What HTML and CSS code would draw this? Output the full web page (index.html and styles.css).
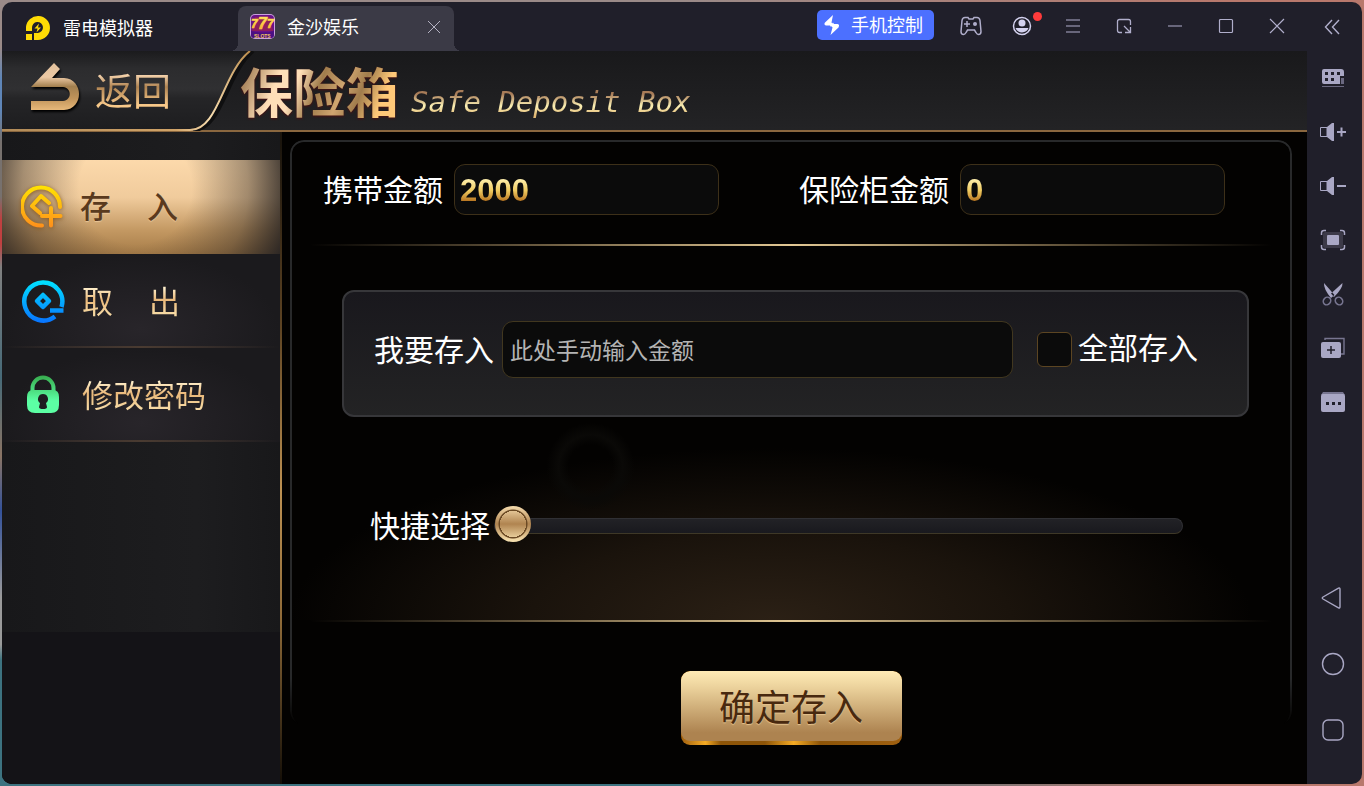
FILE: index.html
```html
<!DOCTYPE html>
<html lang="zh-CN">
<head>
<meta charset="utf-8">
<title>保险箱</title>
<link rel="stylesheet" href="styles.css">
</head>
<body>
<div class="window">
  <header class="topbar">
    <div class="brand">
      <svg width="26" height="26" viewBox="0 0 26 26" aria-hidden="true">
        <path fill="#ffdc05" fill-rule="evenodd" d="M1 16V12A12 12 0 1 1 13 25H9V18H13A5.500 5.500 0 1 0 7 13V16Z"/>
        <path fill="#ffdc05" d="M1 19h6v6H1z"/>
        <path fill="#ffdc05" d="M14 8.500 9.500 13.500h3L11.500 17.500 16 12.500h-3z"/>
      </svg>
      <span>雷电模拟器</span>
    </div>
    <div class="tab">
      <svg width="25" height="25" viewBox="0 0 25 25" aria-hidden="true">
        <defs>
          <linearGradient id="sevens" x1="0" y1="0" x2="0" y2="1"><stop offset="0" stop-color="#fff27a"/><stop offset="1" stop-color="#f5a01c"/></linearGradient>
        </defs>
        <rect width="25" height="25" rx="5" fill="#c9a0dc"/>
        <rect x="1" y="1" width="23" height="23" rx="4" fill="#6a1288"/>
        <path d="M2 17 5 3h15l3 14z" fill="#8d1f5c"/>
        <g fill="url(#sevens)" stroke="#ffd23c" stroke-width=".6" class="slot-digits">
          <text x="1" y="14" font-size="12">7</text>
          <text x="17" y="14" font-size="12">7</text>
          <text x="8" y="15" font-size="16">7</text>
        </g>
        <path d="M1 17q11.500 3 23 0v4a3 3 0 0 1-3 3H4a3 3 0 0 1-3-3z" fill="#4b1183"/>
        <text x="4" y="24" font-size="5" fill="#f3c560" class="slot-word">SLOTS</text>
      </svg>
      <span class="tab-name">金沙娱乐</span>
      <button class="tab-close" aria-label="关闭标签"><svg width="14" height="14" viewBox="0 0 14 14"><path d="M1 1 13 13M13 1 1 13" stroke="#b4b2c2"/></svg></button>
    </div>
    <button class="phone">
      <svg width="16" height="22" viewBox="0 0 16 22" aria-hidden="true"><path fill="#fff" d="M9 1 1 8.500q-1.500 2.500 1 3h4l1 1.500L9 10.500 7.500 8.500zM6.500 21l8-7.500q1.500-3-1-3.500H10L9 8.500 7 11l1.500 2.500z"/></svg>
      <span>手机控制</span>
    </button>
    <nav class="tools">
      <button class="tool" aria-label="手柄"><svg width="22" height="20" viewBox="0 0 22 20" fill="none" stroke="#b0aecb" stroke-width="1.500"><path d="M5 1.500H8L9 3h4l1-1.500h3q2.500 0 3 3l1 11q0 3-2.500 3-1.500 0-2.500-2l-1.500-2.500h-7L6 16.500q-1 2-2.500 2-2.500 0-2.500-3l1-11q.5-3 3-3zM7 5v6M4 8h6"/><circle cx="15" cy="8" r="2" fill="#b0aecb" stroke="none"/></svg></button>
      <button class="tool account" aria-label="账号"><svg width="20" height="20" viewBox="0 0 20 20"><circle cx="10" cy="10" r="8.500" fill="#201f2a" stroke="#d3d1ee" stroke-width="1.500"/><circle cx="10" cy="7" r="3.500" fill="#d3d1ee"/><path d="M3.500 12h13a7 7 0 0 1-13 0z" fill="#d3d1ee"/></svg><i class="dot"></i></button>
      <button class="tool" aria-label="菜单"><svg width="16" height="16" viewBox="0 0 16 16" stroke="#b0aecb" stroke-width="1.200"><path d="M1 2h14M1 8h14M1 14h14"/></svg></button>
      <button class="tool" aria-label="小窗"><svg width="18" height="18" viewBox="0 0 18 18" fill="none" stroke="#b0aecb" stroke-width="1.300"><path d="M7 15.500H4.500q-2 0-2-2v-9q0-2 2-2h9q2 0 2 2V8M9 9l6 6M10 15.500h5.500V10"/></svg></button>
      <button class="tool" aria-label="最小化"><svg width="16" height="16" viewBox="0 0 16 16" stroke="#b0aecb" stroke-width="1.200"><path d="M1 8h14"/></svg></button>
      <button class="tool" aria-label="最大化"><svg width="16" height="16" viewBox="0 0 16 16" fill="none" stroke="#b0aecb" stroke-width="1.200"><rect x="1.500" y="1.500" width="13" height="13" rx="1"/></svg></button>
      <button class="tool" aria-label="关闭"><svg width="16" height="16" viewBox="0 0 16 16" stroke="#b0aecb" stroke-width="1.200"><path d="m1 1 14 14M15 1 1 15"/></svg></button>
      <button class="tool collapse" aria-label="收起"><svg width="16" height="16" viewBox="0 0 16 16" fill="none" stroke="#b0aecb" stroke-width="1.400"><path d="M8 1 1.500 8 8 15M15 1 8.500 8 15 15"/></svg></button>
    </nav>
  </header>

  <div class="workspace">
    <div class="game">
      <header class="game-head">
        <svg class="head-shape" width="262" height="80" viewBox="0 0 262 80" aria-hidden="true">
          <defs>
            <linearGradient id="plate" x1="0" y1="0" x2="0" y2="1"><stop offset="0" stop-color="#1b1b1d"/><stop offset=".22" stop-color="#2c2c2e"/><stop offset=".48" stop-color="#303032"/><stop offset=".6" stop-color="#252527"/><stop offset="1" stop-color="#1d1d1f"/></linearGradient>
            <linearGradient id="rim" x1="0" y1="0" x2="1" y2="0"><stop offset="0" stop-color="#b08a58"/><stop offset=".7" stop-color="#d0a368"/><stop offset=".84" stop-color="#f7dcae"/><stop offset="1" stop-color="#b98a4a"/></linearGradient>
          </defs>
          <path d="M0 0H248C220 22 217 79 188 79H0z" fill="url(#plate)"/>
          <path d="M251 0C224 22 220 79 191 79" fill="none" stroke="#0f0f10" stroke-width="4"/>
          <path d="M248 0C220 22 217 79 188 79H0" fill="none" stroke="url(#rim)" stroke-width="2"/>
        </svg>
        <button class="back">
          <svg width="52" height="52" viewBox="0 0 52 52" aria-hidden="true">
            <defs><linearGradient id="arrow" x1="0" y1="0" x2="0" y2="1"><stop offset="0" stop-color="#e2c19c"/><stop offset=".3" stop-color="#ecc9a4"/><stop offset=".5" stop-color="#a3804f"/><stop offset=".75" stop-color="#c0935a"/><stop offset="1" stop-color="#e7b87a"/></linearGradient></defs>
            <path d="M26 2 32 8 24 17H36C56 18 56 48 36 49H3V40H35C44 39 44 27 35 26H3z" fill="url(#arrow)"/>
          </svg>
          <span>返回</span>
        </button>
        <h1 class="title">保险箱</h1>
        <p class="subtitle">Safe Deposit Box</p>
      </header>

      <div class="game-body">
        <nav class="menu">
          <button class="menu-item active">
            <svg width="44" height="46" viewBox="0 0 44 46" fill="none" aria-hidden="true">
              <defs><linearGradient id="gold" gradientUnits="userSpaceOnUse" x1="0" y1="0" x2="0" y2="46"><stop offset="0" stop-color="#ffe900"/><stop offset="1" stop-color="#ff8c1c"/></linearGradient></defs>
              <g stroke="url(#gold)" stroke-width="4" stroke-linecap="round" stroke-linejoin="round"><path d="M39 24A19 19 0 1 0 21 42.500M28 20l-8-7L11 23l8 7M30 25V42.500M21 33H39.500" /></g>
            </svg>
            <span class="pair"><span>存</span><span>入</span></span>
          </button>
          <button class="menu-item">
            <svg width="44" height="46" viewBox="0 0 44 46" fill="none" aria-hidden="true">
              <defs><linearGradient id="blue" gradientUnits="userSpaceOnUse" x1="0" y1="0" x2="0" y2="46"><stop offset="0" stop-color="#00ecff"/><stop offset="1" stop-color="#0873ff"/></linearGradient></defs>
              <g stroke="url(#blue)" stroke-width="4.500"><path d="M40.500 30A19 19 0 1 0 34 39.500"/><path stroke-linejoin="round" d="m22 18 6 6-6 6-6-6z"/><path d="M29 33.500H42.500" /></g>
            </svg>
            <span class="pair"><span>取</span><span>出</span></span>
          </button>
          <button class="menu-item">
            <svg width="44" height="46" viewBox="0 0 44 46" fill="none" aria-hidden="true">
              <defs><linearGradient id="green" gradientUnits="userSpaceOnUse" x1="0" y1="4" x2="0" y2="30"><stop offset="0" stop-color="#36a94b"/><stop offset="1" stop-color="#5cffa4"/></linearGradient></defs>
              <path d="M11.500 21V17a10.500 10.500 0 0 1 21 0v4" stroke="url(#green)" stroke-width="4"/>
              <path fill="url(#green)" fill-rule="evenodd" d="M12 19H32q6 0 6 7v8q0 8-8 8H14q-8 0-8-8V26q0-7 6-7zM22 23a5 5 0 0 0-3 9l-1 4q0 2 4 2t4-2l-1-4a5 5 0 0 0-3-9z"/>
            </svg>
            <span class="menu-text">修改密码</span>
          </button>
        </nav>

        <main class="main">
          <form class="panel">
            <div class="balances">
              <div class="field"><label for="carry">携带金额</label><output class="amount" id="carry"><span>2000</span></output></div>
              <div class="field"><label for="safe">保险柜金额</label><output class="amount" id="safe"><span>0</span></output></div>
            </div>
            <div class="rule"></div>
            <div class="stage">
              <div class="deposit">
                <label for="sum">我要存入</label>
                <input class="sum" id="sum" type="text" placeholder="此处手动输入金额">
                <div class="all"><input id="all" type="checkbox"><label for="all">全部存入</label></div>
              </div>
              <div class="quick">
                <label for="range">快捷选择</label>
                <input class="range" id="range" type="range" min="0" max="100" value="0">
              </div>
            </div>
            <div class="rule"></div>
            <div class="actions"><button class="submit" type="button"><span>确定存入</span></button></div>
          </form>
        </main>
      </div>
    </div>

    <aside class="rail">
      <button class="rail-item" aria-label="键盘"><svg width="24" height="20" viewBox="0 0 24 20"><path fill="#a9a7c4" d="M3 1h17q3 0 3 3v4h-4v8H3q-2 0-2-2V3q0-2 2-2z"/><path fill="#201f2a" d="M4 4h3v3H4zM10 4h3v3h-3zM16 4h3v3h-3zM4 10h3v3H4zM10 10h3v3h-3z"/><path fill="#6a6880" d="M20 10h3v6h-3zM1 18h22v1H1z"/></svg></button>
      <button class="rail-item" aria-label="音量加"><svg width="28" height="20" viewBox="0 0 28 20"><path d="M1.500 5.500H8v9H1.500z" fill="none" stroke="#a9a7c4"/><path fill="#a9a7c4" d="M8 5 13 1h2v18h-2l-5-4zM18 9h3.500V5.500h2V9H27v2h-3.500v3.500h-2V11H18z"/></svg></button>
      <button class="rail-item" aria-label="音量减"><svg width="28" height="20" viewBox="0 0 28 20"><path d="M1.500 5.500H8v9H1.500z" fill="none" stroke="#a9a7c4"/><path fill="#a9a7c4" d="M8 5 13 1h2v18h-2l-5-4zM18 9h9v2h-9z"/></svg></button>
      <button class="rail-item" aria-label="全屏"><svg width="26" height="22" viewBox="0 0 26 22"><rect x="3" y="3" width="20" height="16" rx="2" fill="#3c3a48"/><rect x="7" y="6" width="12" height="10" rx="1" fill="#a9a7c4"/><path d="M1.500 6V4q0-2.500 2.500-2.500h2M20 1.500h2q2.500 0 2.500 2.500v2M24.500 16v2q0 2.500-2.500 2.500h-2M6 20.500H4Q1.500 20.500 1.500 18v-2" fill="none" stroke="#a9a7c4" stroke-width="1.500"/></svg></button>
      <button class="rail-item" aria-label="截图"><svg width="22" height="24" viewBox="0 0 22 24"><path fill="#a9a7c4" d="M2 1q-.5 6 7 15l3.500-3zM20.500 1q.5 5-8.500 14L9 11.500z"/><g fill="none" stroke="#777590" stroke-width="1.600"><ellipse cx="5" cy="19" rx="3.500" ry="4" transform="rotate(40 5 19)"/><ellipse cx="17" cy="19" rx="3.500" ry="4" transform="rotate(-40 17 19)"/></g></svg></button>
      <button class="rail-item" aria-label="多开"><svg width="24" height="22" viewBox="0 0 24 22"><path d="M4 3V1.500h19V17h-3" fill="none" stroke="#777590" stroke-width="1.400"/><rect y="5" width="20" height="16" rx="2" fill="#a9a7c4"/><path d="M10 9v8M6 13h8" stroke="#201f2a" stroke-width="1.500"/></svg></button>
      <button class="rail-item" aria-label="更多"><svg width="24" height="22" viewBox="0 0 24 22"><path d="M2 1h20l2 3H0z" fill="#777590"/><rect y="3" width="24" height="18" rx="2" fill="#a9a7c4"/><path fill="#201f2a" d="M5 11h3v3H5zM11 11h3v3h-3zM17 11h3v3h-3z"/></svg></button>
      <div class="rail-nav">
        <button class="nav-item" aria-label="返回键"><svg width="24" height="24" viewBox="0 0 24 24" fill="none" stroke="#a9a7c4" stroke-width="1.400"><path stroke-linejoin="round" d="M17.500 2.200q1.500-.8 1.500 1v17.600q0 1.800-1.500 1L2 13q-1.500-1 0-2z"/></svg></button>
        <button class="nav-item" aria-label="主页键"><svg width="24" height="24" viewBox="0 0 24 24" fill="none" stroke="#a9a7c4" stroke-width="1.400"><circle cx="12" cy="12" r="10.500"/></svg></button>
        <button class="nav-item" aria-label="任务键"><svg width="24" height="24" viewBox="0 0 24 24" fill="none" stroke="#a9a7c4" stroke-width="1.400"><rect x="2" y="2" width="20" height="20" rx="5"/></svg></button>
      </div>
    </aside>
  </div>
</div>
</body>
</html>
```

FILE: styles.css
```css
* { box-sizing: border-box; }

body {
  margin: 0;
  padding: 2px;
  height: 100vh;
  display: flex;
  background:
    linear-gradient(90deg, transparent 50%, #b8786c 90%),
    linear-gradient(#9a8a88 0 6%, #5f86b8 10% 14%, #77716e 18% 25%, #c04040 28% 31%, #808080 34%, #476a78 48%, #8a7464 58%, #34529a 65%, #9a9a9a 76% 82%, #3d7380 84%);
  font-family: "Noto Sans CJK SC", "Noto Sans", sans-serif;
  color: #fff;
}

button {
  border: 0;
  padding: 0;
  background: none;
  color: inherit;
  font: inherit;
}

svg { display: block; flex: none; }

.window {
  flex: 1;
  min-width: 0;
  display: flex;
  flex-direction: column;
  border-radius: 10px;
  overflow: hidden;
  background: #201f2a;
}

/* emulator title bar */
.topbar {
  height: 49px;
  flex: none;
  display: flex;
  font-size: 18px;
  line-height: 24px;
}

.topbar span { padding-bottom: 2px; }

.brand {
  width: 236px;
  display: flex;
  align-items: center;
  gap: 12px;
  padding: 2px 0 0 23px;
}

.tab {
  position: relative;
  width: 216px;
  margin-top: 4px;
  padding: 0 13px 4px 12px;
  display: flex;
  align-items: center;
  gap: 12px;
  background: #3b3a46;
  border-radius: 8px 8px 0 0;
}

.tab::before,
.tab::after {
  content: "";
  position: absolute;
  bottom: 0;
  width: 8px;
  height: 8px;
}

.tab::before {
  right: 100%;
  background: radial-gradient(circle at 0 0, transparent 8px, #3b3a46 8px);
}

.tab::after {
  left: 100%;
  background: radial-gradient(circle at 100% 0, transparent 8px, #3b3a46 8px);
}

.tab-name { flex: 1; }

.slot-digits,
.slot-word {
  font-family: "Liberation Sans", sans-serif;
  font-weight: 700;
}

.slot-digits { font-style: italic; }

.phone {
  width: 117px;
  height: 30px;
  margin: 8px 11px 0 auto;
  padding-left: 7px;
  display: flex;
  align-items: center;
  gap: 11px;
  border-radius: 5px;
  background: #4c70ff;
}

.tools { display: flex; }

.tool {
  width: 51px;
  height: 47px;
  display: flex;
  align-items: center;
  justify-content: center;
}

.account { position: relative; }

.dot {
  position: absolute;
  top: 10px;
  right: 5px;
  width: 9px;
  height: 9px;
  border-radius: 50%;
  background: #ff3b3b;
}

.collapse {
  width: 60px;
  height: 49px;
}

.workspace {
  flex: 1;
  min-height: 0;
  display: flex;
}

.game {
  flex: 1;
  min-width: 0;
  display: flex;
  flex-direction: column;
  background: #030201;
}

/* game header */
.game-head {
  position: relative;
  height: 81px;
  flex: none;
  display: flex;
  align-items: flex-start;
  border-bottom: 2px solid #8a673f;
  background: linear-gradient(#19191b, #232325);
}

.head-shape {
  position: absolute;
  left: 0;
  top: 0;
}

.back {
  position: relative;
  width: 238px;
  height: 80px;
  padding: 0 0 8px 26px;
  display: flex;
  align-items: center;
  gap: 15px;
  font-size: 38px;
  line-height: 56px;
}

.back svg { filter: drop-shadow(1px 2px 1px #000); }

.back span {
  padding-top: 4px;
  background: linear-gradient(#f5d3ac 30%, #b08452 50%, #f8c98a 80%);
  background-clip: text;
  color: transparent;
}

.title {
  position: relative;
  margin: 0;
  padding: 0 12px 0 0;
  font-size: 53px;
  line-height: 78px;
  font-weight: 700;
  background: linear-gradient(112deg, #a8845c 8%, #ffdfb8 24%, #ffdfb8 34%, #a07c4c 46%, #d0a570 58%, #a07c4c 68%, #ffc878 80%);
  background-clip: text;
  color: transparent;
  filter: drop-shadow(0 1px 1px #4a1010);
}

.subtitle {
  margin: 0;
  padding-right: 6px;
  font-family: "DejaVu Sans Mono", monospace;
  font-size: 29px;
  line-height: 102px;
  font-style: italic;
  background: linear-gradient(#a87c58 42%, #fbf0b4 54%, #e2b874 63%);
  background-clip: text;
  color: transparent;
}

.game-body {
  flex: 1;
  min-height: 0;
  display: flex;
}

/* side menu */
.menu {
  width: 280px;
  flex: none;
  padding-top: 28px;
  background: linear-gradient(90deg, #18181a, #1d1d1f 70%, #18181a) 0 0 / 100% 500px no-repeat, #141317;
  border-right: 2px solid;
  border-image: linear-gradient(#1b150d 2%, #5e4423 30%, #bd9152 55%, #8e6a38 75%, #120d06) 1;
}

.menu-item {
  width: 100%;
  height: 94px;
  padding: 0 0 2px 19px;
  display: flex;
  align-items: center;
  gap: 17px;
  font-size: 31px;
  line-height: 44px;
  background:
    linear-gradient(90deg, transparent, #4a3b31 50%, transparent) 0 100% / 100% 2px no-repeat,
    radial-gradient(ellipse at 50% 80%, #28252a, #1b1a1d 70%);
}

.menu-item:not(.active) .pair span,
.menu-text {
  background: linear-gradient(#fff0cc 22%, #e9b778 50%, #f6d8a2 80%);
  background-clip: text;
  color: transparent;
}

.pair {
  display: flex;
  gap: 36px;
}

.active {
  color: #5a3a1e;
  gap: 15px;
  font-weight: 500;
  text-shadow: 0 1px 1px #e8c698;
  background:
    radial-gradient(ellipse 58% 170% at 48% 30%, transparent 35%, #2a252366 70%, #2a2523 100%),
    linear-gradient(#fcd9ab, #f0cb9c 40%, #c39862 75%, #a67c48);
}

.active > .pair { padding-bottom: 2px; }

.active svg { filter: drop-shadow(0 1px 2px #8a5a20); }

/* safe deposit panel */
.main {
  flex: 1;
  min-width: 0;
  padding: 8px 15px 0 8px;
  background: #030201;
}

.panel {
  position: relative;
  margin: 0;
}

.panel::before {
  content: "";
  position: absolute;
  inset: 0 0 60px;
  border: 2px solid #28292a;
  border-bottom: 0;
  border-radius: 14px;
  mask-image: linear-gradient(#000 92%, transparent);
  pointer-events: none;
}

.panel label { padding-bottom: 4px; }

.balances {
  padding: 24px 67px 29px 33px;
  display: flex;
  justify-content: space-between;
}

.field {
  display: flex;
  align-items: center;
  gap: 11px;
  font-size: 30px;
  line-height: 44px;
}

.amount {
  width: 265px;
  height: 51px;
  padding-left: 5px;
  border: 1px solid #3d3019;
  border-radius: 11px;
  background: #0b0b0b;
  font-family: "Liberation Sans", sans-serif;
  font-size: 31px;
  line-height: 51px;
  font-weight: 700;
}

.amount span {
  background: linear-gradient(#fff2b4 15%, #f0cb60 50%, #b5701e 82%);
  background-clip: text;
  color: transparent;
}

.rule {
  height: 2px;
  background: linear-gradient(90deg, transparent 2%, #6b5b40 25%, #e2c894 50%, #6b5b40 75%, transparent 98%);
}

.stage {
  padding: 44px 43px 70px 52px;
  background:
    radial-gradient(circle at 30% 59%, transparent 22px, #0a0907 32px, transparent 44px),
    radial-gradient(ellipse 48% 46% at 48% 100%, #2b2015, #1a130c 50%, transparent);
}

.deposit {
  height: 127px;
  padding: 0 49px 8px 30px;
  display: flex;
  align-items: center;
  border: 2px solid #37373a;
  border-radius: 12px;
  background: linear-gradient(#19181d, #232324);
  font-size: 30px;
  line-height: 44px;
}

.sum {
  flex: 1;
  min-width: 0;
  height: 57px;
  margin: 0 24px 0 8px;
  padding: 0 7px 2px;
  border: 1px solid #41371f;
  border-radius: 11px;
  background: #0b0b0b;
  color: #fff;
  font: inherit;
  font-size: 23px;
}

.sum::placeholder { color: #b4b4b4; }

.all {
  display: flex;
  align-items: center;
  gap: 6px;
}

.all label { padding-bottom: 8px; }

.all input {
  appearance: none;
  width: 35px;
  height: 35px;
  margin: 0;
  border: 1px solid #5c4522;
  border-radius: 6px;
  background: #0b0b0b;
}

.all input:checked { background: #c39862; }

.quick {
  margin: 85px 66px 0 28px;
  display: flex;
  align-items: center;
  gap: 4px;
  font-size: 30px;
  line-height: 44px;
}

.range {
  appearance: none;
  flex: 1;
  min-width: 0;
  height: 38px;
  margin: 0;
  background: none;
}

.range::-webkit-slider-runnable-track {
  height: 16px;
  border: 1px solid #303034;
  border-bottom-color: #3e3827;
  border-radius: 8px;
  background: linear-gradient(#222226, #19191e);
}

.range::-webkit-slider-thumb {
  appearance: none;
  width: 36px;
  height: 36px;
  margin-top: -13px;
  border-radius: 50%;
  background:
    radial-gradient(circle, transparent 13px, #6b4a25 13px, #6b4a25 14px, transparent 15px),
    linear-gradient(#f6dcae, #b08450 50%, #fbe6b4);
}

.actions {
  display: flex;
  justify-content: center;
  padding: 49px 0 40px;
}

.submit {
  width: 221px;
  height: 74px;
  padding-bottom: 4px;
  border-radius: 9px;
  overflow: hidden;
  display: flex;
  color: #48290f;
  font-size: 36px;
  line-height: 68px;
  text-shadow: 0 1px 1px #e6c48e;
  background: linear-gradient(90deg, #a06010, #f5ab25 11%, #8e5508 18%, #8e5508 38%, #f5ab25 51%, #8e5508 63%, #a06010);
}

.submit span {
  flex: 1;
  border-radius: 9px;
  background: linear-gradient(#ffebb6, #ead09a 25%, #ad8350 88%);
}

/* emulator tool rail */
.rail {
  width: 55px;
  flex: none;
  display: flex;
  flex-direction: column;
}

.rail-item,
.nav-item {
  display: flex;
  align-items: center;
  justify-content: center;
  width: 100%;
  height: 54px;
  padding-right: 4px;
}

.nav-item { height: 66px; }

.rail-nav {
  margin-top: auto;
  padding-bottom: 21px;
}
```
